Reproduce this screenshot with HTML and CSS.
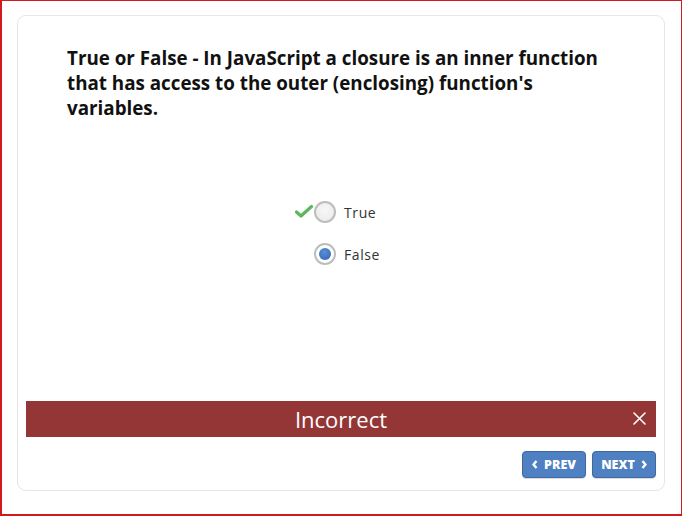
FILE: index.html
```
<!DOCTYPE html>
<html>
<head>
<meta charset="utf-8">
<link rel="stylesheet" href="styles.css">
</head>
<body>
<div class="frame">
  <div class="card">
    <div class="question">True or False - In JavaScript a closure is an inner function that has access to the outer (enclosing) function's variables.</div>
    <div class="options">
      <label class="option">
        <svg class="check" width="18" height="15" viewBox="0 0 18 15"><path d="M1.5 8 L6 12 L16.5 2.5" fill="none" stroke="#5cb85c" stroke-width="3.2" stroke-linecap="round" stroke-linejoin="round"/></svg>
        <span class="radio"></span>
        <span class="text">True</span>
      </label>
      <label class="option">
        <span class="radio checked"><span class="dot"></span></span>
        <span class="text">False</span>
      </label>
    </div>
    <div class="spacer"></div>
    <div class="feedback">
      <span class="feedback-text">Incorrect</span>
      <svg class="close" width="13" height="13" viewBox="0 0 13 13"><path d="M1 1 L12 12 M12 1 L1 12" stroke="#fff" stroke-width="1.6" stroke-linecap="round"/></svg>
    </div>
    <div class="nav">
      <button class="btn"><svg class="chev" width="6" height="9" viewBox="0 0 6 9"><path d="M4.5 1 L1.5 4.5 L4.5 8" fill="none" stroke="#fff" stroke-width="2.4"/></svg>PREV</button>
      <button class="btn">NEXT<svg class="chev right" width="6" height="9" viewBox="0 0 6 9"><path d="M1.5 1 L4.5 4.5 L1.5 8" fill="none" stroke="#fff" stroke-width="2.4"/></svg></button>
    </div>
  </div>
</div>
</body>
</html>
```
FILE: styles.css
```
html, body {
  margin: 0;
  padding: 0;
  background: #fff;
}
.frame {
  width: 682px;
  height: 516px;
  box-sizing: border-box;
  border: 1px solid #d11a1f;
  border-left-width: 2px;
  border-bottom-width: 2px;
  padding: 14px 0 0 15px;
  font-family: "Open Sans", sans-serif;
}
.card {
  width: 648px;
  height: 476px;
  box-sizing: border-box;
  border: 1px solid #e6e6e6;
  border-radius: 9px;
  padding: 30px 8px 12px 8px;
  display: flex;
  flex-direction: column;
}
.question {
  padding: 0 44px 0 41px;
  font-size: 18.8px;
  font-weight: 700;
  line-height: 25px;
  color: #111;
}
.options {
  margin-top: 80px;
  display: flex;
  flex-direction: column;
  align-items: center;
  gap: 20px;
  padding-left: 10px;
}
.option {
  position: relative;
  display: flex;
  align-items: center;
  height: 22px;
  width: 64px;
}
.check {
  position: absolute;
  left: -19px;
  top: 3px;
}
.radio {
  flex: 0 0 auto;
  width: 22px;
  height: 22px;
  box-sizing: border-box;
  border-radius: 50%;
  border: 2px solid #bdbdbd;
  background: radial-gradient(circle at 50% 40%, #f7f7f7, #e9e9e9);
  display: flex;
  align-items: center;
  justify-content: center;
}
.radio.checked {
  background: #fff;
}
.dot {
  width: 12px;
  height: 12px;
  border-radius: 50%;
  background: radial-gradient(circle at 45% 35%, #5b8fd6, #2f62b0);
}
.text {
  margin-left: 8px;
  font-size: 14px;
  letter-spacing: 0.6px;
  color: #333;
  white-space: nowrap;
}
.spacer {
  flex: 1;
}
.feedback {
  position: relative;
  height: 36px;
  background: #943636;
  color: #fff;
  display: flex;
  align-items: center;
  justify-content: center;
}
.feedback-text {
  font-size: 22px;
  font-weight: 400;
}
.close {
  position: absolute;
  right: 10px;
  top: 11px;
}
.nav {
  margin-top: 14px;
  display: flex;
  justify-content: flex-end;
  gap: 6px;
}
.btn {
  width: 64px;
  height: 27px;
  box-sizing: border-box;
  border: 1px solid #3e68a3;
  border-radius: 4px;
  background: #4e80c2;
  color: #fff;
  font-family: "Open Sans", sans-serif;
  font-weight: 800;
  font-size: 12.5px;
  padding: 0;
  display: flex;
  align-items: center;
  justify-content: center;
  box-shadow: 0 1px 1px rgba(0,0,0,0.15);
}
.chev {
  margin-right: 6px;
}
.chev.right {
  margin-right: 0;
  margin-left: 6px;
}
```
